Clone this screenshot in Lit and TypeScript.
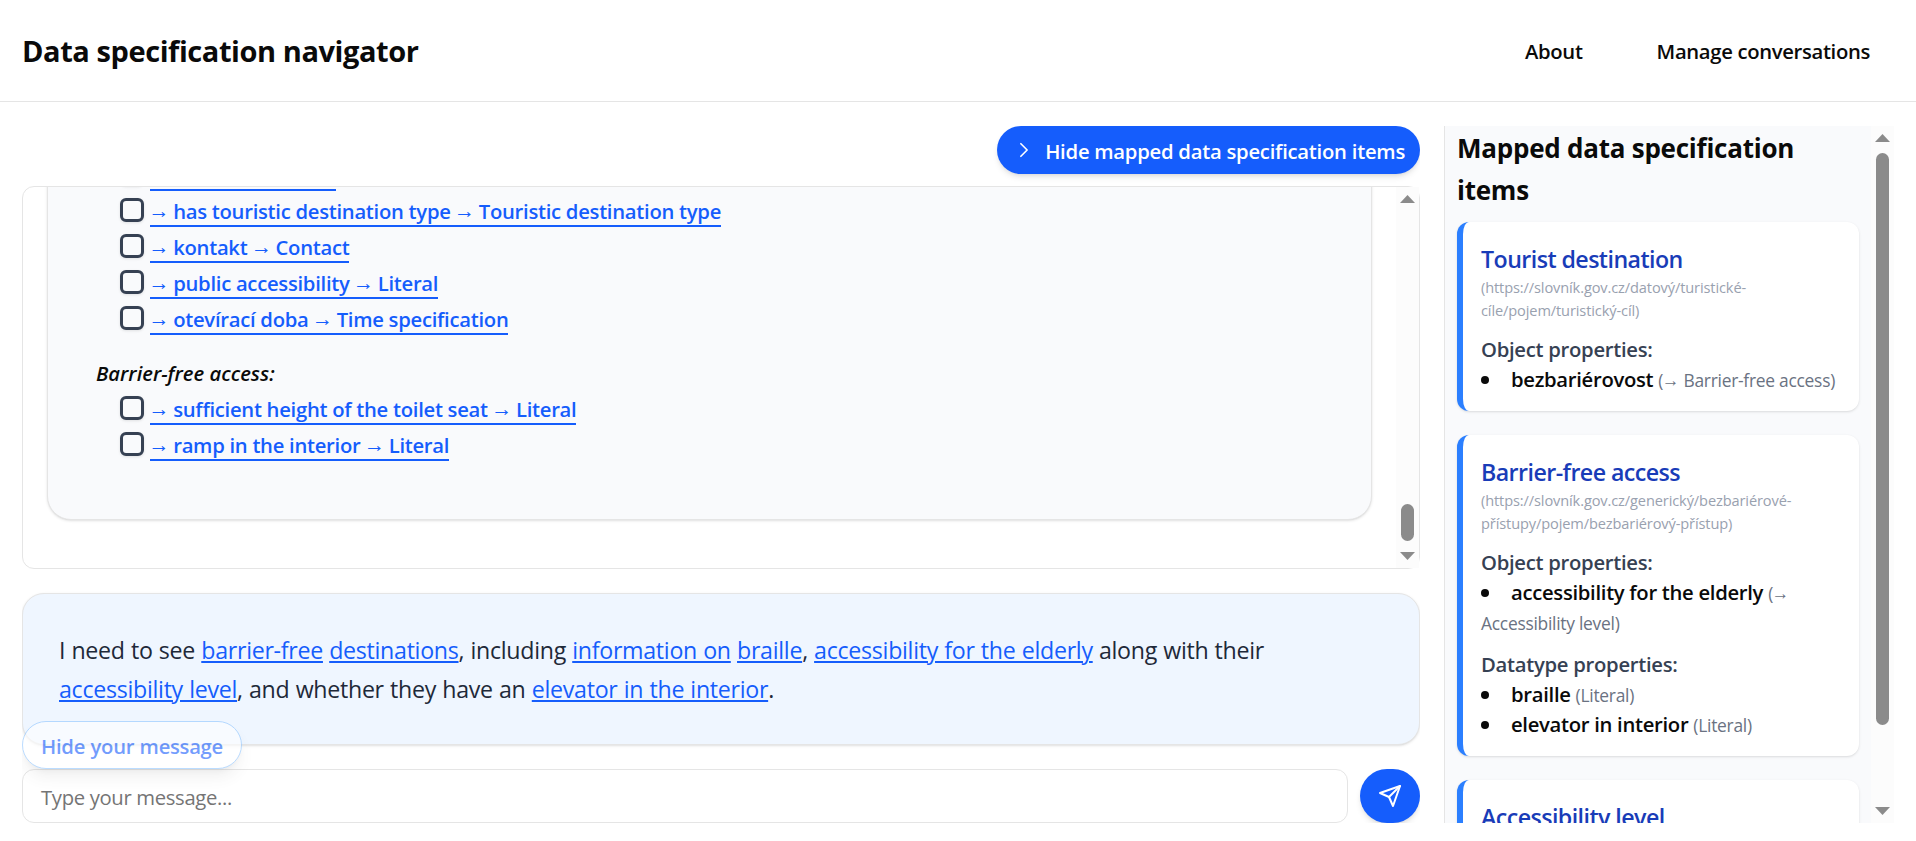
import { LitElement, html, css, svg } from "lit";
import { customElement } from "lit/decorators.js";

type Prop = { name: string; target: string; arrow?: boolean };
type Card = { title: string; uri: string; object?: Prop[]; datatype?: Prop[] };

const cards: Card[] = [
  {
    title: "Tourist destination",
    uri: "(https://slovník.gov.cz/datový/turistické-cíle/pojem/turistický-cíl)",
    object: [{ name: "bezbariérovost", target: "Barrier-free access", arrow: true }],
  },
  {
    title: "Barrier-free access",
    uri: "(https://slovník.gov.cz/generický/bezbariérové-přístupy/pojem/bezbariérový-přístup)",
    object: [{ name: "accessibility for the elderly", target: "Accessibility level", arrow: true }],
    datatype: [
      { name: "braille", target: "Literal" },
      { name: "elevator in interior", target: "Literal" },
    ],
  },
  { title: "Accessibility level", uri: "" },
];

const destinationItems: [string, string][] = [
  ["kouření", "Literal"],
  ["has touristic destination type", "Touristic destination type"],
  ["kontakt", "Contact"],
  ["public accessibility", "Literal"],
  ["otevírací doba", "Time specification"],
];
const accessItems: [string, string][] = [
  ["sufficient height of the toilet seat", "Literal"],
  ["ramp in the interior", "Literal"],
];

const up = html`<svg class="tri" viewBox="0 0 15 8">${svg`<path d="M7.5 0L15 8H0z"/>`}</svg>`;
const down = html`<svg class="tri" viewBox="0 0 15 8">${svg`<path d="M0 0h15L7.5 8z"/>`}</svg>`;
const arrow = html`<span class="arr">→</span>`;

@customElement("app-root")
export class AppRoot extends LitElement {
  static styles = css`
    :host {
      display: flex;
      flex-direction: column;
      height: 841px;
      overflow: hidden;
      background: #fff;
      color: #0a0a0a;
      font-family: "Open Sans", "Noto Sans", sans-serif;
      font-size: 20.25px;
      letter-spacing: -0.28px;
    }
    * { box-sizing: border-box; }
    header {
      height: 102px;
      flex: none;
      display: flex;
      align-items: center;
      justify-content: space-between;
      padding: 0 46px 0 22px;
      border-bottom: 1px solid #e5e5e5;
    }
    h1 { margin: 0; font-size: 29px; font-weight: 700; letter-spacing: -0.42px; }
    nav { display: flex; gap: 74px; font-weight: 600; letter-spacing: -0.33px; padding-top: 1px; }
    main { display: flex; gap: 24px; padding: 24px 22px 0; height: 721px; }
    .left { width: 1398px; display: flex; flex-direction: column; height: 697px; overflow: hidden; flex: none; }
    .toggle {
      align-self: flex-end;
      flex: none;
      height: 48px;
      width: 423px;
      padding: 2px 15px 0 17px;
      border-radius: 24px;
      background: #155dfc;
      color: #fff;
      font-weight: 600;
      letter-spacing: -0.25px;
      display: flex;
      align-items: center;
      justify-content: space-between;
      box-shadow: 0 4px 6px -1px rgb(0 0 0 / 0.1), 0 2px 4px -2px rgb(0 0 0 / 0.1);
    }
    .toggle svg { width: 20px; height: 20px; margin-top: -3px; }
    .icon { fill: none; stroke: currentColor; stroke-width: 2; stroke-linecap: round; stroke-linejoin: round; }
    .chat {
      margin-top: 12px;
      height: 383px;
      flex: none;
      border: 1px solid #e5e5e5;
      border-radius: 12px;
      display: flex;
    }
    .view { flex: 1; overflow: hidden; display: flex; flex-direction: column; justify-content: flex-end; padding: 0 24px 48px; }
    .reply {
      flex: none;
      padding: 60px 48px 57px;
      border: 1px solid #e5e5e5;
      border-radius: 24px;
      background: #f9fafc;
      box-shadow: 0 1px 3px rgb(0 0 0 / 0.1), 0 1px 2px -1px rgb(0 0 0 / 0.1);
      font-weight: 600;
    }
    .row { height: 36px; display: flex; align-items: flex-start; padding-left: 24px; }
    .box {
      width: 24px;
      height: 24px;
      margin: 6px 6px 0 0;
      border: 3px solid #364153;
      border-radius: 6px;
      background: #f9fafc;
      box-shadow: 0 1px 3px rgb(0 0 0 / 0.1);
    }
    .link {
      color: #155dfc;
      margin-top: 6px;
      height: 29px;
      line-height: 27px;
      border-bottom: 2px solid #155dfc;
      white-space: nowrap;
      letter-spacing: -0.28px;
    }
    .arr {
      display: inline-block;
      width: 18.2px;
      font-size: 21px;
      line-height: 16px;
      font-weight: 400;
      letter-spacing: 0;
      text-indent: -1.5px;
      vertical-align: 1.5px;
    }
    .group { height: 36px; line-height: 38px; margin-top: 18px; font-style: italic; letter-spacing: 0; }
    .bar { width: 23px; flex: none; background: #fcfcfc; display: flex; flex-direction: column; align-items: center; padding: 8px 0; }
    .tri { width: 15px; height: 8px; fill: #8b8b8b; flex: none; }
    .thumb { width: 13px; border-radius: 7px; background: #8b8b8b; flex: none; }
    .chat .thumb { margin: 301px 0 11px; height: 37px; }
    .side .thumb { margin: 11px 0 82px; height: 572px; }
    .msg {
      margin-top: 24px;
      height: 152px;
      flex: none;
      padding: 37px 36px 0;
      border: 1px solid #e5e5e5;
      border-radius: 22px;
      background: #eff6ff;
      color: #1e2939;
      font-size: 23.2px;
      line-height: 39px;
      letter-spacing: -0.29px;
      word-spacing: 0.5px;
      box-shadow: 0 1px 3px rgb(0 0 0 / 0.1), 0 1px 2px -1px rgb(0 0 0 / 0.1);
      position: relative;
    }
    .msg a { color: #155dfc; text-decoration: underline 2px; text-underline-offset: 2px; }
    .hide {
      position: absolute;
      left: -1px;
      bottom: -25px;
      width: 220px;
      height: 48px;
      border: 1px solid #8ec5ff;
      border-radius: 24px;
      background: #fff;
      opacity: 0.6;
      color: #155dfc;
      font-size: 20.25px;
      font-weight: 600;
      line-height: 48px;
      text-align: center;
      box-shadow: 0 10px 15px -3px rgb(0 0 0 / 0.1), 0 4px 6px -4px rgb(0 0 0 / 0.1);
      z-index: 1;
    }
    .compose { margin-top: 24px; display: flex; gap: 12px; height: 54px; }
    .input { flex: 1; border: 1px solid #e5e5e5; border-radius: 12px; color: #757575; padding: 0 18px; line-height: 54px; letter-spacing: -0.33px; }
    .send {
      width: 60px;
      border-radius: 27px;
      background: #155dfc;
      color: #fff;
      display: flex;
      align-items: center;
      justify-content: center;
      box-shadow: 0 4px 6px -1px rgb(0 0 0 / 0.1), 0 2px 4px -2px rgb(0 0 0 / 0.1);
    }
    .send svg { width: 24px; height: 24px; }
    .side { width: 450px; height: 697px; overflow: hidden; border-left: 1px solid #e5e5e5; background: #f9fafc; display: flex; }
    .items { flex: 1; padding: 1px 12px 0; overflow: hidden; }
    h2 { margin: 0 0 11px; font-size: 26px; font-weight: 700; line-height: 42px; letter-spacing: -0.24px; }
    .card {
      padding: 18px 10px 17px 18px;
      margin-bottom: 24px;
      border-left: 6px solid #2b7fff;
      border-radius: 12px;
      background: #fff;
      box-shadow: 0 1px 3px rgb(0 0 0 / 0.1), 0 1px 2px -1px rgb(0 0 0 / 0.1);
      line-height: 30px;
    }
    .name { height: 36px; font-size: 23.2px; line-height: 38px; font-weight: 600; color: #193cb8; letter-spacing: -0.56px; }
    .uri { width: 300px; font-size: 14.6px; line-height: 23px; color: #99a1af; letter-spacing: -0.12px; }
    .kind { margin-top: 12px; font-weight: 600; color: #364153; }
    .prop { line-height: 30px; }
    .prop b { font-weight: 600; letter-spacing: -0.3px; }
    .dot { display: inline-block; width: 8px; height: 8px; border-radius: 50%; background: #0a0a0a; margin-right: 22px; vertical-align: 3px; }
    .to { font-size: 17.4px; color: #6a7282; letter-spacing: -0.26px; line-height: 1; }
    .to .arr { font-size: 17.4px; width: 16px; line-height: 14px; vertical-align: 1px; }
  `;

  private link([a, b]: [string, string]) {
    return html`<div class="row"><span class="box"></span><span class="link">${arrow} ${a} ${arrow} ${b}</span></div>`;
  }

  private props(title: string, list?: Prop[]) {
    if (!list) return "";
    return html`<div class="kind">${title}</div>
      ${list.map(
        (p) => html`<div class="prop"><span class="dot"></span><b>${p.name}</b> <span class="to">(${p.arrow ? html`${arrow} ` : ""}${p.target})</span></div>`
      )}`;
  }

  render() {
    return html`
      <header>
        <h1>Data specification navigator</h1>
        <nav><a>About</a><a>Manage conversations</a></nav>
      </header>
      <main>
        <section class="left">
          <div class="toggle">
            <svg class="icon" viewBox="0 0 24 24"><path d="m8.25 4.5 7.5 7.5-7.5 7.5" /></svg>
            <span>Hide mapped data specification items</span>
          </div>
          <div class="chat">
            <div class="view">
              <div class="reply">
                ${destinationItems.map((i) => this.link(i))}
                <div class="group">Barrier-free access:</div>
                ${accessItems.map((i) => this.link(i))}
              </div>
            </div>
            <div class="bar">${up}<span class="thumb"></span>${down}</div>
          </div>
          <div class="msg">
            I need to see <a>barrier-free</a> <a>destinations</a>, including <a>information on</a> <a>braille</a>, <a>accessibility for the elderly</a> along with their <a>accessibility level</a>, and whether they have an <a>elevator in the interior</a>.
            <div class="hide">Hide your message</div>
          </div>
          <div class="compose">
            <div class="input">Type your message...</div>
            <div class="send">
              <svg class="icon" viewBox="0 0 24 24"><path d="M22 2 11 13" /><path d="m22 2-7 20-4-9-9-4Z" /></svg>
            </div>
          </div>
        </section>
        <aside class="side">
          <div class="items">
            <h2>Mapped data specification items</h2>
            ${cards.map(
              (c) => html`<div class="card">
                <div class="name">${c.title}</div>
                <div class="uri">${c.uri}</div>
                ${this.props("Object properties:", c.object)} ${this.props("Datatype properties:", c.datatype)}
              </div>`
            )}
          </div>
          <div class="bar">${up}<span class="thumb"></span>${down}</div>
        </aside>
      </main>
    `;
  }
}
